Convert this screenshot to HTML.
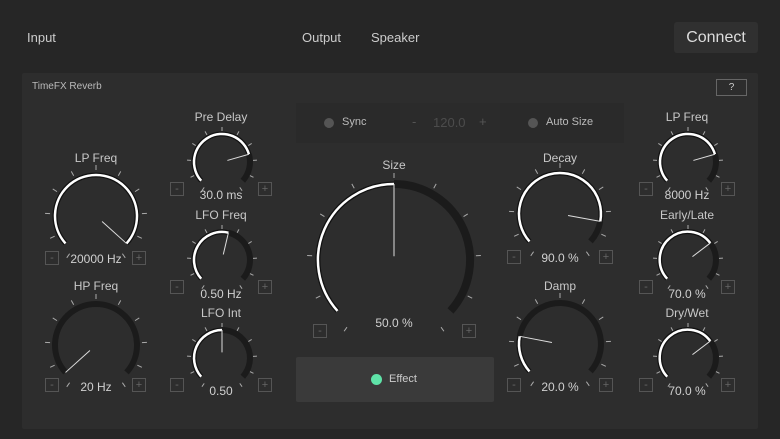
<!DOCTYPE html><html><head><meta charset="utf-8"><style>
body{margin:0;width:780px;height:439px;background:#262626;font-family:"Liberation Sans",sans-serif;overflow:hidden;position:relative;color:#ccc}
.a{position:absolute;white-space:nowrap}
.c{transform:translateX(-50%);text-align:center}
.lbl{font-size:12px;color:#c8c8c8}
.val{font-size:12px;color:#d0d0d0}
.btn{position:absolute;width:14px;height:14px;border:1px solid #555;box-sizing:border-box;color:#666;font-size:11px;line-height:12px;text-align:center}
#panel{position:absolute;left:22px;top:73px;width:736px;height:356px;background:#2d2d2d;border-radius:2px}
</style></head><body>
<div class="a" style="left:27px;top:30px;font-size:13px;color:#ccc">Input</div>
<div class="a" style="left:302px;top:30px;font-size:13px;color:#ccc">Output</div>
<div class="a" style="left:371px;top:30px;font-size:13px;color:#ccc">Speaker</div>
<div class="a" style="left:674px;top:22px;width:84px;height:31px;background:#303030;border-radius:3px;font-size:16px;color:#ddd;text-align:center;line-height:31px">Connect</div>
<div id="panel"></div>
<div class="a" style="left:32px;top:81px;font-size:10px;color:#bbb">TimeFX Reverb</div>
<div class="a" style="left:716px;top:79px;width:31px;height:17px;border:1px solid #666;box-sizing:border-box;font-size:10px;color:#ccc;text-align:center;line-height:15px">?</div>
<div class="a" style="left:296px;top:103px;width:104px;height:40px;background:#2a2a2a"></div>
<div class="a" style="left:400px;top:103px;width:100px;height:40px;background:#2b2b2b"></div>
<div class="a" style="left:500px;top:103px;width:124px;height:40px;background:#2a2a2a"></div>
<div class="a" style="left:324px;top:118px;width:10px;height:10px;border-radius:50%;background:#555"></div>
<div class="a" style="left:342px;top:116px;font-size:11px;color:#bbb">Sync</div>
<div class="a" style="left:412px;top:114px;font-size:13px;color:#555">-</div>
<div class="a" style="left:433px;top:115px;font-size:13px;color:#4c4c4c">120.0</div>
<div class="a" style="left:479px;top:114px;font-size:13px;color:#555">+</div>
<div class="a" style="left:528px;top:118px;width:10px;height:10px;border-radius:50%;background:#555"></div>
<div class="a" style="left:546px;top:116px;font-size:11px;color:#bbb">Auto Size</div>
<div class="a" style="left:296px;top:357px;width:198px;height:45px;background:#3a3a3a;border-radius:2px"></div>
<div class="a" style="left:371px;top:374px;width:11px;height:11px;border-radius:50%;background:#5fe3a8"></div>
<div class="a" style="left:389px;top:373px;font-size:11px;color:#ccc">Effect</div>
<svg id="s" class="a" style="left:0;top:0" width="780" height="439"></svg>

<div class="a c lbl" style="left:96px;top:151px">LP Freq</div><div class="a c val" style="left:96px;top:252px">20000 Hz</div>
<div class="a c lbl" style="left:96px;top:279px">HP Freq</div><div class="a c val" style="left:96px;top:380px">20 Hz</div>
<div class="a c lbl" style="left:221px;top:110px">Pre Delay</div><div class="a c val" style="left:221px;top:188px">30.0 ms</div>
<div class="a c lbl" style="left:221px;top:208px">LFO Freq</div><div class="a c val" style="left:221px;top:287px">0.50 Hz</div>
<div class="a c lbl" style="left:221px;top:306px">LFO Int</div><div class="a c val" style="left:221px;top:384px">0.50</div>
<div class="a c lbl" style="left:394px;top:158px">Size</div><div class="a c val" style="left:394px;top:316px">50.0 %</div>
<div class="a c lbl" style="left:560px;top:151px">Decay</div><div class="a c val" style="left:560px;top:251px">90.0 %</div>
<div class="a c lbl" style="left:560px;top:279px">Damp</div><div class="a c val" style="left:560px;top:380px">20.0 %</div>
<div class="a c lbl" style="left:687px;top:110px">LP Freq</div><div class="a c val" style="left:687px;top:188px">8000 Hz</div>
<div class="a c lbl" style="left:687px;top:208px">Early/Late</div><div class="a c val" style="left:687px;top:287px">70.0 %</div>
<div class="a c lbl" style="left:687px;top:306px">Dry/Wet</div><div class="a c val" style="left:687px;top:384px">70.0 %</div>

<div class="btn" style="left:45px;top:251px">-</div><div class="btn" style="left:132px;top:251px">+</div>
<div class="btn" style="left:45px;top:378px">-</div><div class="btn" style="left:132px;top:378px">+</div>
<div class="btn" style="left:170px;top:182px">-</div><div class="btn" style="left:258px;top:182px">+</div>
<div class="btn" style="left:170px;top:280px">-</div><div class="btn" style="left:258px;top:280px">+</div>
<div class="btn" style="left:170px;top:378px">-</div><div class="btn" style="left:258px;top:378px">+</div>
<div class="btn" style="left:313px;top:324px">-</div><div class="btn" style="left:462px;top:324px">+</div>
<div class="btn" style="left:507px;top:250px">-</div><div class="btn" style="left:599px;top:250px">+</div>
<div class="btn" style="left:507px;top:378px">-</div><div class="btn" style="left:599px;top:378px">+</div>
<div class="btn" style="left:639px;top:182px">-</div><div class="btn" style="left:721px;top:182px">+</div>
<div class="btn" style="left:639px;top:280px">-</div><div class="btn" style="left:721px;top:280px">+</div>
<div class="btn" style="left:639px;top:378px">-</div><div class="btn" style="left:721px;top:378px">+</div>
<script>
var s=document.getElementById('s'),h='';
function P(cx,cy,r,deg){var a=(deg-90)*Math.PI/180;return [cx+r*Math.cos(a),cy+r*Math.sin(a)];}
function arc(cx,cy,r,a0,a1){var p=P(cx,cy,r,a0),q=P(cx,cy,r,a1),l=(a1-a0)>180?1:0;return 'M'+p[0].toFixed(1)+' '+p[1].toFixed(1)+'A'+r+' '+r+' 0 '+l+' 1 '+q[0].toFixed(1)+' '+q[1].toFixed(1);}
function knob(cx,cy,r,f){
 var a0=-132,a1=132,av=a0+(a1-a0)*f,t0=r>30?(r>50?6:5):3,t1=t0+(r>30?5:4);
 for(var i=0;i<11;i++){var d=-145+290*i/10,p=P(cx,cy,r+t0,d),q=P(cx,cy,r+t1,d);h+='<line x1="'+p[0]+'" y1="'+p[1]+'" x2="'+q[0]+'" y2="'+q[1]+'" stroke="#aaa" stroke-width="1"/>';}
 if(f<1)h+='<path d="'+arc(cx,cy,r,av,a1)+'" stroke="#1b1b1b" stroke-width="'+(r>50?8:6)+'" fill="none"/>';
 if(f>0.005){h+='<path d="'+arc(cx,cy,r,a0,av)+'" stroke="#111" stroke-width="5" fill="none"/>';h+='<path d="'+arc(cx,cy,r,a0,av)+'" stroke="#fff" stroke-width="2.5" fill="none"/>';}
 var e=P(cx,cy,r,av),b=P(cx,cy,r*(r>50?0.05:0.2),av);
 h+='<line x1="'+b[0]+'" y1="'+b[1]+'" x2="'+e[0]+'" y2="'+e[1]+'" stroke="#ddd" stroke-width="1"/>';
}
knob(96,216,41,1);knob(96,345,41,0);
knob(222,162,28,0.78);knob(222,260,28,0.55);knob(222,358,28,0.5);
knob(394,260,76,0.5);
knob(560,214,41,0.88);knob(560,344,41,0.2);
knob(688,162,28,0.78);knob(688,260,28,0.7);knob(688,358,28,0.7);
s.innerHTML=h;
</script>
</body></html>
